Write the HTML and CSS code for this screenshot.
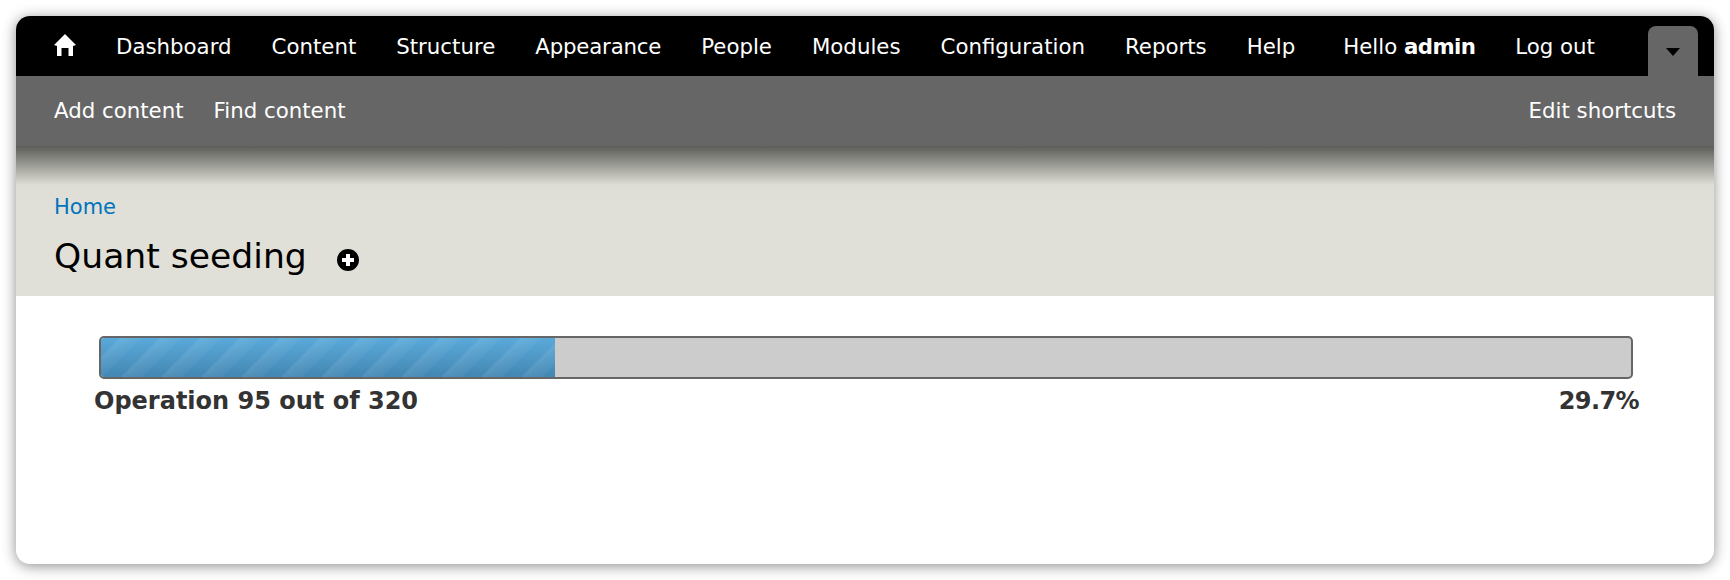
FILE: index.html
```html
<!DOCTYPE html>
<html lang="en">
  <head>
    <meta charset="UTF-8" />
    <meta name="viewport" content="width=device-width, initial-scale=1.0" />
    <title>Quant seeding</title>
    <link rel="stylesheet" href="styles.css">
  </head>
  <body>
    <div class="window">
      <!-- toolbar -->
      <div class="toolbar">
        <a class="home-link" href="#" aria-label="Home">
          <svg width="22" height="22" viewBox="0 0 22 22">
            <path fill="#fff" d="M11 0 L22 11 L19 12 L19 22 L14.500 22 L14.500 14 L7.500 14 L7.500 22 L3 22 L3 12 L0 11 Z" />
          </svg>
        </a>
        <nav class="menu">
          <a href="#">Dashboard</a>
          <a href="#">Content</a>
          <a href="#">Structure</a>
          <a class="tight" href="#">Appearance</a>
          <a href="#">People</a>
          <a href="#">Modules</a>
          <a href="#">Configuration</a>
          <a href="#">Reports</a>
          <a href="#">Help</a>
        </nav>
        <div class="user-menu">
          <a href="#">Hello <strong>admin</strong></a>
          <a href="#">Log out</a>
        </div>
        <div class="drawer-toggle"><span class="arrow"></span></div>
      </div>

      <!-- shortcuts -->
      <div class="shortcuts">
        <a href="#">Add content</a>
        <a href="#">Find content</a>
        <a class="edit-shortcuts" href="#">Edit shortcuts</a>
      </div>

      <!-- page header -->
      <div class="page-header">
        <a class="breadcrumb" href="#">Home</a>
        <div class="title-row">
          <h1>Quant seeding</h1>
          <svg class="add-shortcut" width="22" height="22" viewBox="0 0 22 22">
            <circle cx="11" cy="11" r="11" fill="#000" />
            <path fill="#fff" d="M9 5 H13 V9 H17 V13 H13 V17 H9 V13 H5 V9 H9 Z" />
          </svg>
        </div>
      </div>

      <!-- progress -->
      <div class="content">
        <div class="progress-bar">
          <div class="progress-fill" style="width: 29.7%"></div>
        </div>
        <div class="progress-info">
          <span>Operation 95 out of 320</span>
          <span class="percent">29.7%</span>
        </div>
      </div>
    </div>
  </body>
</html>
```

FILE: styles.css
```css
* {
  margin: 0;
  padding: 0;
  box-sizing: border-box;
}

html,
body {
  height: 100%;
  overflow: hidden;
}

body {
  font-family: "DejaVu Sans", Verdana, sans-serif;
  padding: 16px;
  background-color: #fff;
}

a {
  color: inherit;
  text-decoration: none;
}

.window {
  height: 548px;
  background-color: #fff;
  border-radius: 14px;
  overflow: hidden;
  box-shadow: 0 2px 14px rgba(0, 0, 0, 0.45);
}

.toolbar {
  display: flex;
  align-items: center;
  height: 60px;
  padding: 0 16px 0 38px;
  background-color: #000;
  color: #fff;
  font-size: 21.3px;
}

.home-link {
  display: flex;
  width: 62px;
  margin-top: -2px;
}

.menu,
.user-menu {
  display: flex;
  gap: 40px;
}

.tight {
  letter-spacing: -0.2px;
}

.user-menu {
  margin-left: 48px;
}

.user-menu strong {
  letter-spacing: -0.6px;
}

.drawer-toggle {
  display: flex;
  justify-content: center;
  align-self: flex-end;
  width: 50px;
  height: 50px;
  margin-left: auto;
  padding-top: 22px;
  background-color: #666;
  border-radius: 8px 8px 0 0;
}

.arrow {
  width: 0;
  height: 0;
  border-top: 8px solid #000;
  border-left: 7px solid transparent;
  border-right: 7px solid transparent;
}

.shortcuts {
  display: flex;
  align-items: center;
  gap: 30px;
  height: 70px;
  padding: 0 38px 2px;
  background-color: #666;
  color: #fff;
  font-size: 21.3px;
}

.edit-shortcuts {
  margin-left: auto;
}

.page-header {
  height: 150px;
  padding: 49px 38px 0;
  background: linear-gradient(#5c5c58 0, #deded6 39px, #e0e0d8 60px);
}

.breadcrumb {
  color: #0074bd;
  font-size: 21px;
}

.title-row {
  display: flex;
  align-items: center;
  margin-top: 17px;
}

h1 {
  font-size: 34.6px;
  font-weight: normal;
  color: #000;
}

.add-shortcut {
  margin: 7px 0 0 30px;
}

.content {
  padding: 40px 75px 0 78px;
}

.progress-bar {
  height: 43px;
  margin: 0 6px 0 5px;
  background-color: #ccc;
  border: 2px solid #666;
  border-radius: 5px;
  overflow: hidden;
}

.progress-fill {
  height: 100%;
  background:
    repeating-linear-gradient(135deg, rgba(255, 255, 255, 0) 0, rgba(255, 255, 255, 0) 13px, rgba(255, 255, 255, 0.09) 14px, rgba(255, 255, 255, 0.03) 28.3px),
    linear-gradient(#5aa9da, #4387b3);
}

.progress-info {
  display: flex;
  justify-content: space-between;
  margin-top: 8px;
  font-size: 24px;
  font-weight: bold;
  color: #333;
}

.percent {
  letter-spacing: -0.6px;
}
```
